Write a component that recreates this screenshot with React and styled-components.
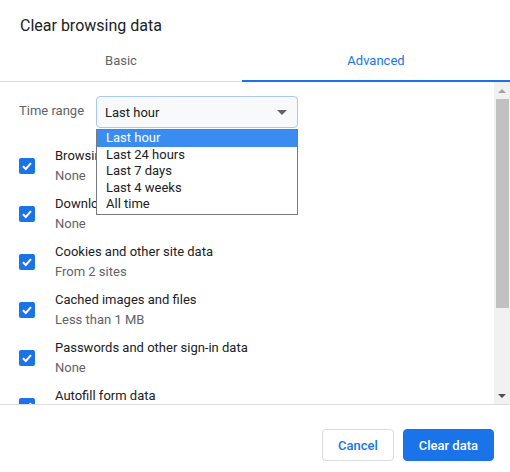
import React from 'react'
import styled, { createGlobalStyle } from 'styled-components'

const GlobalStyle = createGlobalStyle`
  * { box-sizing: border-box; }
  body {
    margin: 0;
    background: #fff;
    font-family: Roboto, "Liberation Sans", Arial, sans-serif;
  }
`;

const Dialog = styled.div`
  width: 510px;
  height: 472px;
  display: flex;
  flex-direction: column;
  background: #fff;
  overflow: hidden;
`;

const Title = styled.div`
  height: 44px;
  padding: 16px 0 0 20px;
  font-size: 16px;
  line-height: 20px;
  color: #202124;
`;

const Tabs = styled.div`
  height: 38px;
  display: flex;
  border-bottom: 1px solid #dadce0;
`;

const Tab = styled.div`
  width: ${p => (p.$grow ? 'auto' : '242px')};
  flex: ${p => (p.$grow ? 1 : 'none')};
  display: flex;
  align-items: center;
  justify-content: center;
  padding-bottom: 4px;
  font-size: 13px;
  font-weight: 400;
  color: ${p => (p.$active ? '#1a73e8' : '#5f6368')};
  border-bottom: 2px solid ${p => (p.$active ? '#1a73e8' : 'transparent')};
  margin-bottom: -1px;
`;

const Body = styled.div`
  height: 323px;
  display: flex;
  border-bottom: 1px solid #dadce0;
`;

const Content = styled.div`
  flex: 1;
  overflow: hidden;
  padding: 14px 0 0 19px;
  position: relative;
`;

const RangeRow = styled.div`
  display: flex;
  align-items: center;
  height: 32px;
  margin-bottom: 18px;
`;

const RangeLabel = styled.span`
  width: 77px;
  font-size: 13px;
  color: #5f6368;
  margin-top: -4px;
`;

const SelectWrap = styled.div`
  position: relative;
  width: 202px;
  height: 32px;
`;

const SelectBox = styled.div`
  height: 100%;
  display: flex;
  align-items: center;
  justify-content: space-between;
  padding: 0 10px 0 8px;
  background: #f8f9fa;
  border: 1px solid #a8c7fa;
  border-radius: 4px;
  font-size: 13px;
  color: #202124;
`;

const Caret = styled.span`
  width: 0;
  height: 0;
  border-left: 5px solid transparent;
  border-right: 5px solid transparent;
  border-top: 5px solid #5f6368;
`;

const Menu = styled.ul`
  position: absolute;
  top: 33px;
  left: 0;
  width: 202px;
  margin: 0;
  padding: 0 0 1px;
  list-style: none;
  background: #fff;
  border: 1px solid #7a7a7a;
  z-index: 5;
`;

const MenuItem = styled.li`
  height: 16.5px;
  line-height: 16.5px;
  padding-left: 9px;
  font-size: 13px;
  color: ${p => (p.$selected ? '#fff' : '#202124')};
  background: ${p => (p.$selected ? '#3b8cf0' : 'transparent')};
`;

const List = styled.div`
  display: flex;
  flex-direction: column;
  gap: 8px;
`;

const Row = styled.div`
  display: flex;
  align-items: center;
  gap: 20px;
  height: 40px;
`;

const Check = styled.span`
  width: 16px;
  height: 16px;
  flex: none;
  border-radius: 2px;
  background: #1a73e8;
  display: flex;
  align-items: center;
  justify-content: center;
`;

const Texts = styled.div`
  display: flex;
  flex-direction: column;
  font-size: 13px;
  line-height: 20px;
`;

const Label = styled.span`
  color: #202124;
`;

const Sub = styled.span`
  min-height: 20px;
  color: #5f6368;
`;

const Scrollbar = styled.div`
  width: 16px;
  display: flex;
  flex-direction: column;
  background: #f1f1f1;
`;

const Arrow = styled.div`
  height: 17px;
  display: flex;
  align-items: center;
  justify-content: center;
  &::after {
    content: '';
    border-left: 4px solid transparent;
    border-right: 4px solid transparent;
    ${p => (p.$down
      ? 'border-top: 4px solid #505050;'
      : 'border-bottom: 4px solid #a3a3a3;')}
  }
`;

const Track = styled.div`
  flex: 1;
  padding: 0 1px 0 2px;
`;

const Thumb = styled.div`
  height: 209px;
  background: #c1c1c1;
`;

const Footer = styled.div`
  flex: 1;
  display: flex;
  justify-content: flex-end;
  align-items: flex-start;
  gap: 9px;
  padding: 24px 16px 0 0;
`;

const Button = styled.button`
  height: 32px;
  padding: 0 ${p => (p.$primary ? '15px' : '15px')};
  border-radius: 4px;
  font-family: inherit;
  font-size: 13px;
  font-weight: 500;
  border: 1px solid ${p => (p.$primary ? '#1a73e8' : '#dadce0')};
  background: ${p => (p.$primary ? '#1a73e8' : '#fff')};
  color: ${p => (p.$primary ? '#fff' : '#1a73e8')};
`;

const ranges = ['Last hour', 'Last 24 hours', 'Last 7 days', 'Last 4 weeks', 'All time']

const items = [
  ['Browsing history', 'None'],
  ['Download history', 'None'],
  ['Cookies and other site data', 'From 2 sites'],
  ['Cached images and files', 'Less than 1 MB'],
  ['Passwords and other sign-in data', 'None'],
  ['Autofill form data', ''],
]

const Tick = () => (
  <svg width="12" height="12" viewBox="0 0 12 12">
    <path d="M2 6.2 L4.8 9 L10 3.2" fill="none" stroke="#fff" strokeWidth="2" />
  </svg>
)

const App = () => {
  return (
    <Dialog>
      <GlobalStyle />
      <Title>Clear browsing data</Title>
      <Tabs>
        <Tab>Basic</Tab>
        <Tab $grow $active>Advanced</Tab>
      </Tabs>
      <Body>
        <Content>
          <RangeRow>
            <RangeLabel>Time range</RangeLabel>
            <SelectWrap>
              <SelectBox>
                Last hour
                <Caret />
              </SelectBox>
              <Menu>
                {ranges.map((r, i) => (
                  <MenuItem key={r} $selected={i === 0}>{r}</MenuItem>
                ))}
              </Menu>
            </SelectWrap>
          </RangeRow>
          <List>
            {items.map(([label, sub]) => (
              <Row key={label}>
                <Check><Tick /></Check>
                <Texts>
                  <Label>{label}</Label>
                  <Sub>{sub}</Sub>
                </Texts>
              </Row>
            ))}
          </List>
        </Content>
        <Scrollbar>
          <Arrow />
          <Track><Thumb /></Track>
          <Arrow $down />
        </Scrollbar>
      </Body>
      <Footer>
        <Button>Cancel</Button>
        <Button $primary>Clear data</Button>
      </Footer>
    </Dialog>
  )
}

export default App
